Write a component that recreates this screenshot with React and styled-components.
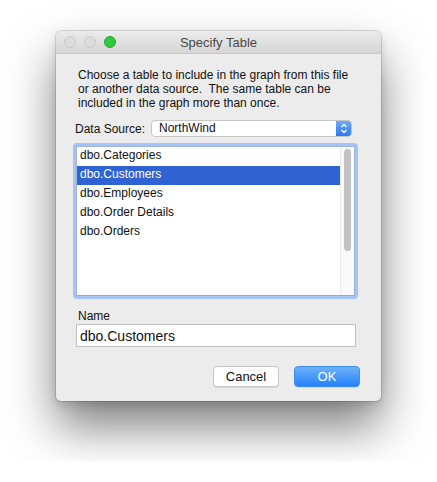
import styled, { createGlobalStyle } from "styled-components";

const GlobalStyle = createGlobalStyle`
  body {
    margin: 0;
    background: #ffffff;
    font-family: "Liberation Sans", Arial, sans-serif;
    color: #111;
  }
`;

const Page = styled.div`
  padding: 31px 0 60px 56px;
`;

const Window = styled.div`
  width: 325px;
  height: 370px;
  background: #ececec;
  border-radius: 5px;
  box-shadow: 0 0 0 1px rgba(0, 0, 0, 0.12), 0 4px 10px rgba(0, 0, 0, 0.12),
    0 26px 48px rgba(0, 0, 0, 0.5);
  display: flex;
  flex-direction: column;
  overflow: hidden;
`;

const TitleBar = styled.div`
  height: 22px;
  display: grid;
  grid-template-columns: 1fr auto 1fr;
  align-items: center;
  background: linear-gradient(#ebebeb, #d6d6d6);
  border-bottom: 1px solid #c8c8c8;
`;

const Lights = styled.div`
  display: flex;
  gap: 8px;
  padding-left: 8px;
`;

const Light = styled.span`
  width: 12px;
  height: 12px;
  box-sizing: border-box;
  border-radius: 50%;
  background: ${(p) => (p.$color ? p.$color : "#dcdcdc")};
  border: 1px solid ${(p) => (p.$color ? "#24a833" : "#c9c9c9")};
`;

const Title = styled.div`
  font-size: 13px;
  color: #474747;
`;

const Content = styled.div`
  padding: 14px 23px 0 17px;
  display: flex;
  flex-direction: column;
`;

const Description = styled.p`
  margin: 0 0 0 5px;
  font-size: 12px;
  line-height: 14px;
`;

const SourceRow = styled.div`
  display: flex;
  align-items: center;
  margin-top: 10px;
  padding-left: 2px;
`;

const Label = styled.span`
  font-size: 12px;
  width: 76px;
`;

const Select = styled.div`
  flex: 1;
  height: 17px;
  margin-right: 6px;
  display: flex;
  align-items: stretch;
  background: #fff;
  border: 1px solid #c6c6c6;
  border-radius: 4px;
  box-sizing: border-box;
  overflow: hidden;
`;

const SelectValue = styled.span`
  flex: 1;
  font-size: 12px;
  line-height: 15px;
  padding-left: 7px;
`;

const Stepper = styled.span`
  width: 15px;
  display: flex;
  align-items: center;
  justify-content: center;
  background: linear-gradient(#6cabf9, #2f77f3);
`;

const ListFrame = styled.div`
  margin-top: 6px;
  height: 156px;
  box-sizing: border-box;
  padding: 3px;
  border-radius: 4px;
  background: #a4c4f8;
`;

const ListBox = styled.div`
  height: 100%;
  box-sizing: border-box;
  background: #fff;
  border: 1px solid #9fb4d6;
  border-bottom-color: #a7a7a7;
  display: flex;
`;

const Rows = styled.div`
  flex: 1;
`;

const Row = styled.div`
  height: 19px;
  line-height: 17px;
  font-size: 12px;
  padding-left: 3px;
  background: ${(p) => (p.$selected ? "#2f63d4" : "transparent")};
  color: ${(p) => (p.$selected ? "#fff" : "#111")};
`;

const ScrollTrack = styled.div`
  width: 13px;
  background: #fafafa;
  border-left: 1px solid #ececec;
  padding-top: 2px;
  display: flex;
  justify-content: center;
`;

const Thumb = styled.div`
  width: 7px;
  height: 102px;
  border-radius: 4px;
  background: #c2c2c2;
`;

const NameLabel = styled.div`
  margin: 10px 0 0 5px;
  font-size: 12px;
  line-height: 14px;
`;

const NameInput = styled.div`
  margin: 1px 2px 0 3px;
  height: 23px;
  box-sizing: border-box;
  background: #fff;
  border: 1px solid #c0c0c0;
  font-size: 14px;
  line-height: 23px;
  padding-left: 3px;
`;

const Buttons = styled.div`
  display: flex;
  justify-content: flex-end;
  gap: 15px;
  margin-top: 19px;
  margin-right: -2px;
`;

const Button = styled.div`
  width: 66px;
  height: 21px;
  box-sizing: border-box;
  border-radius: 4px;
  display: flex;
  align-items: center;
  justify-content: center;
  font-size: 13px;
  background: ${(p) => (p.$primary ? "linear-gradient(#6fb2fb, #2482fb)" : "#fff")};
  color: ${(p) => (p.$primary ? "#fff" : "#111")};
  border: 1px solid ${(p) => (p.$primary ? "#3d8bf5" : "#c6c6c6")};
  box-shadow: 0 1px 0 rgba(0, 0, 0, 0.08);
`;

const tables = [
  "dbo.Categories",
  "dbo.Customers",
  "dbo.Employees",
  "dbo.Order Details",
  "dbo.Orders",
];

const App = () => {
  return (
    <Page>
      <GlobalStyle />
      <Window>
        <TitleBar>
          <Lights>
            <Light />
            <Light />
            <Light $color="#2fc840" />
          </Lights>
          <Title>Specify Table</Title>
          <span />
        </TitleBar>
        <Content>
          <Description>
            Choose a table to include in the graph from this file or another
            data source.&nbsp; The same table can be included in the graph more
            than once.
          </Description>
          <SourceRow>
            <Label>Data Source:</Label>
            <Select>
              <SelectValue>NorthWind</SelectValue>
              <Stepper>
                <svg width="8" height="11" viewBox="0 0 8 11">
                  <path
                    d="M1.5 4 L4 1.5 L6.5 4 M1.5 7 L4 9.5 L6.5 7"
                    fill="none"
                    stroke="#fff"
                    strokeWidth="1.3"
                  />
                </svg>
              </Stepper>
            </Select>
          </SourceRow>
          <ListFrame>
            <ListBox>
              <Rows>
                {tables.map((t) => (
                  <Row key={t} $selected={t === "dbo.Customers"}>
                    {t}
                  </Row>
                ))}
              </Rows>
              <ScrollTrack>
                <Thumb />
              </ScrollTrack>
            </ListBox>
          </ListFrame>
          <NameLabel>Name</NameLabel>
          <NameInput>dbo.Customers</NameInput>
          <Buttons>
            <Button>Cancel</Button>
            <Button $primary>OK</Button>
          </Buttons>
        </Content>
      </Window>
    </Page>
  );
};

export default App;
